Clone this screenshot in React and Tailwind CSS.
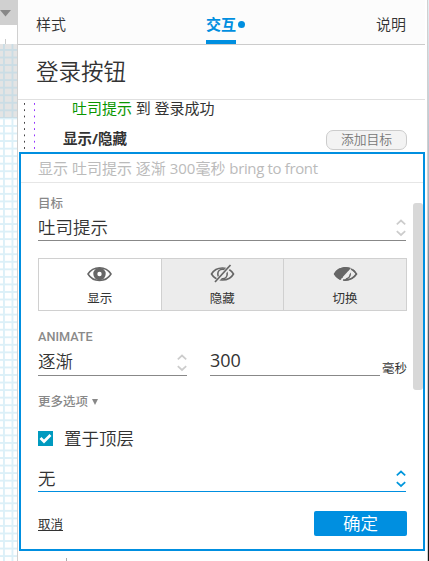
import React from "react";

function Stepper({ color }) {
  return (
    <svg className="mt-[1px]" width="10" height="18" viewBox="0 0 10 18" fill="none" stroke={color} strokeWidth="1.7">
      <path d="M0.8 5.3 L5 1.5 L9.2 5.3 M0.8 12.2 L5 16 L9.2 12.2" />
    </svg>
  );
}

function ShowEye() {
  return (
    <svg width="25" height="16" viewBox="0 0 25 16" fill="none" stroke="#666">
      <path d="M1 8 C6 -.5 19 -.5 24 8 C19 16.5 6 16.5 1 8Z" strokeWidth="1.5" />
      <circle cx="12.5" cy="8" r="4.2" strokeWidth="4" />
    </svg>
  );
}

function HideEye() {
  return (
    <svg width="25" height="20" viewBox="0 0 25 20" fill="none" stroke="#666">
      <path d="M1.5 10 C6 2 19 2 23.5 10 C19 18 6 18 1.5 10Z" strokeWidth="1.6" />
      <circle cx="12.5" cy="10" r="4.7" strokeWidth="1.6" />
      <path d="M5 19 L21 1" stroke="#ececec" strokeWidth="3.6" />
      <path d="M5 18 L20.5 1" strokeWidth="1.7" />
    </svg>
  );
}

function ToggleEye() {
  return (
    <svg width="25" height="16" viewBox="0 0 25 16" fill="none" stroke="#666">
      <path d="M1.5 8 C6 0 19 0 23.5 8 C19 16 6 16 1.5 8Z" strokeWidth="1.5" />
      <circle cx="12.5" cy="8" r="4.7" strokeWidth="1.6" />
      <path d="M19 0 L6 16 L10 16 L20 4Z" fill="#ececec" stroke="none" />
      <path d="M1 8 C5 1 12 0 18 2 L7 14 C4 12 2 10 1 8Z" fill="#666" stroke="none" />
      <path d="M18 3 Q21.5 4.5 23.5 8 Q18 15 10 14" strokeWidth="1.5" />
    </svg>
  );
}

function ActionOption({ icon, label, active }) {
  return (
    <div className={"flex w-[122.5px] flex-col items-center border-r border-[#d0d0d0] last:w-[122px] last:border-r-0 " + (active ? "bg-white" : "bg-[#ececec]")}>
      <div className="flex h-[29px] items-center pt-px">{icon}</div>
      <div className="text-[12.5px] leading-[21px]">{label}</div>
    </div>
  );
}

function CanvasStrip() {
  return (
    <div className="flex w-[17px] shrink-0 flex-col">
      <div className="flex h-[25px] items-end bg-[#d0d0d0] pb-[8px]">
        <svg width="11" height="7" viewBox="0 0 11 7"><path d="M0 0H11L5.5 6.5Z" fill="#888" /></svg>
      </div>
      <div className="flex h-[19px] items-end bg-white pl-[5px]">
        <div className="h-[5px] w-px bg-[#ccc]" />
      </div>
      <div className="h-[74px] bg-[#e4e4e4] bg-[linear-gradient(#cbdde5_1.5px,transparent_1.5px),linear-gradient(90deg,#cbdde5_1.5px,transparent_1.5px)] bg-[size:100%_7.55px,8.5px_100%] bg-[position:0_5px,3px_0]" />
      <div className="flex-1 bg-white bg-[linear-gradient(#dcf0f8_1.5px,transparent_1.5px),linear-gradient(90deg,#dcf0f8_1.5px,transparent_1.5px)] bg-[size:100%_7.55px,8.5px_100%] bg-[position:0_7px,3px_0]" />
    </div>
  );
}

export default function App() {
  return (
    <div className="flex h-[561px] w-[429px] overflow-hidden bg-white font-['Open_Sans','Noto_Sans_CJK_SC',sans-serif] text-[#333] whitespace-nowrap">
      <CanvasStrip />
      <div className="flex w-[411px] shrink-0 flex-col border-x border-[#d0d0d0]">
        <div className="flex h-[45px] w-[407px] justify-between border-b border-[#ccc] bg-[#fcfcfc] pl-[18px] pr-[19px] text-[15px]">
          <div className="pt-[12px] font-[350] leading-[24px]">样式</div>
          <div className="flex pl-[9px] text-[#008fe0]">
            <div className="h-[44px] border-b-[4px] border-[#008fe0] pt-[12px] font-bold leading-[24px]">交互</div>
            <div className="ml-[2px] mt-[21px] size-[7px] rounded-full bg-[#008fe0]" />
          </div>
          <div className="pt-[12px] font-[350] leading-[24px]">说明</div>
        </div>
        <div className="flex h-[55px] w-[407px] items-center border-b border-[#e0e0e0] pl-[18px] text-[22.5px] font-[350]">登录按钮</div>

        <div className="flex h-[52px] w-[407px]">
          <div className="flex gap-[9px] pl-[6px] pt-[3px]">
            <div className="w-px bg-[linear-gradient(#444_2px,transparent_2px)] bg-[size:100%_6.3px]" />
            <div className="w-px bg-[linear-gradient(#9333ff_2px,transparent_2px)] bg-[size:100%_6.3px]" />
          </div>
          <div className="flex-1 pl-[28px] text-[15px]">
            <div className="h-[18px] pl-[9px] leading-[17px] tracking-[-0.04px]"><span className="text-[#0a9600]">吐司提示</span> 到 登录成功</div>
            <div className="mt-[10px] flex items-center justify-between pr-[18px]">
              <span className="text-[14.5px] font-bold leading-[22px]">显示/隐藏</span>
              <span className="mt-px flex h-[20px] w-[81px] items-center justify-center rounded-[7px] border border-[#ccc] bg-[#f3f3f3] pt-px text-[12.8px] font-[350] text-[#777]">添加目标</span>
            </div>
          </div>
        </div>

        <div className="ml-px flex h-[399px] w-[406px] self-start border-2 border-[#008fe0]">
          <div className="w-[391px] shrink-0">
            <div className="h-[29px] w-[402px] border-b border-[#e6e6e6] pl-[17px] text-[15px] leading-[29px] text-[#bbb]">显示 吐司提示 逐渐 300毫秒 <span className="tracking-[-0.36px]">bring to front</span></div>
            <div className="pl-[17px] pr-[5px]">
              <div className="h-[33px] pt-[11px] text-[12.5px] font-medium leading-[20px] text-[#888]">目标</div>
              <div className="mt-[-1px] flex h-[26px] w-[368px] items-center justify-between border-b border-[#888] text-[17.5px] font-[350] leading-[25px]">
                <span>吐司提示</span><Stepper color="#ccc" />
              </div>
              <div className="mt-[17px] flex h-[53px] w-[369px] border border-[#d0d0d0]">
                <ActionOption icon={<ShowEye />} label="显示" active />
                <ActionOption icon={<HideEye />} label="隐藏" />
                <ActionOption icon={<ToggleEye />} label="切换" />
              </div>
              <div className="mt-[15px] h-[20px] font-['Roboto',sans-serif] text-[12.7px] font-medium leading-[21px] text-[#8a8a8a]">ANIMATE</div>
              <div className="mt-[3px] flex h-[27px] w-[369px]">
                <div className="flex w-[149px] items-center justify-between border-b border-[#888] text-[17.5px] font-[350]"><span className="-mt-[2px]">逐渐</span><Stepper color="#ccc" /></div>
                <div className="ml-[23px] flex w-[170px] items-center border-b border-[#888] pb-[3px] text-[18px]">300</div>
                <span className="ml-[2px] pt-[8px] text-[12.5px] leading-[24px]">毫秒</span>
              </div>
              <div className="mt-[16px] flex h-[20px] items-center gap-[4px] text-[12.5px] font-medium text-[#888]">
                更多选项<svg width="6" height="6" viewBox="0 0 6 6"><path d="M0 0H6L3 6Z" fill="#888" /></svg>
              </div>
              <div className="mt-[14px] flex h-[24px] items-center gap-[11px] text-[17.5px] font-[350]">
                <span className="flex size-[15px] items-center justify-center bg-[#009abf]">
                  <svg width="13" height="11" viewBox="0 0 13 11" fill="none" stroke="#fff" strokeWidth="2.7"><path d="M1.5 5L5 8.5L11.5 2" /></svg>
                </span>
                置于顶层
              </div>
              <div className="mt-[15px] flex h-[27px] w-[368px] items-center justify-between border-b border-[#008fe0] text-[17.5px] font-[350]"><span>无</span><Stepper color="#0096dc" /></div>
              <div className="mt-[19px] flex h-[25px] w-[369px] items-center justify-between">
                <span className="pt-[3px] text-[12.5px] underline underline-offset-1">取消</span>
                <button className="h-[25px] w-[93px] rounded-[2px] bg-[#008fe0] text-[17.5px] font-[350] leading-[25px] text-white">确定</button>
              </div>
            </div>
          </div>
          <div className="ml-[1px] mt-[49px] h-[187px] w-[10px] shrink-0 rounded-[3px] bg-[#d8d8d8]" />
        </div>
        <div className="ml-[48px] mt-[7px] h-[3px] w-px bg-[#aaa]" />
      </div>
      <div className="flex-1 bg-[linear-gradient(#e4eef4_0%,#a7b4c2_35%,#3c4855_65%,#151515_90%)]" />
    </div>
  );
}
